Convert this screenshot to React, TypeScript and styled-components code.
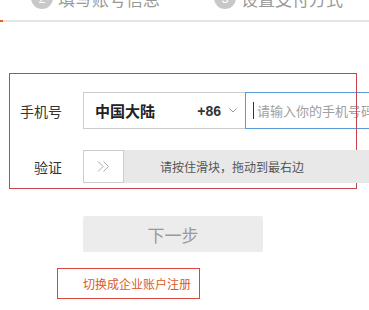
import React from "react";
import styled, { createGlobalStyle } from "styled-components";

const GlobalStyle = createGlobalStyle`
  html, body {
    margin: 0;
    padding: 0;
    overflow: hidden;
    background: #fff;
  }
  body {
    font-family: "Noto Sans CJK SC", "Noto Sans", sans-serif;
    color: #333;
  }
`;

const Page = styled.div`
  width: 369px;
  height: 310px;
  overflow: hidden;
`;

const Steps = styled.div`
  display: flex;
  flex-flow: row nowrap;
  align-items: center;
  height: 24px;
  margin-top: -14px;
`;

const Step = styled.div<{ $left: number }>`
  display: flex;
  align-items: center;
  gap: 5px;
  margin-left: ${(p) => p.$left}px;
  color: #999;
  font-size: 17px;
  white-space: nowrap;
`;

const StepNum = styled.span`
  display: flex;
  align-items: center;
  justify-content: center;
  width: 22px;
  height: 22px;
  border-radius: 50%;
  background: #c8c8c8;
  color: #fff;
  font-size: 13px;
  font-family: "Liberation Sans", Arial, sans-serif;
`;

const Progress = styled.div`
  position: relative;
  height: 2px;
  margin-top: 10px;
  background: #e4e4e4;
`;

const ProgressDone = styled.div`
  width: 3px;
  height: 100%;
  background: #e8641b;
`;

const Form = styled.div`
  position: relative;
  display: grid;
  grid-template-columns: 62px 298px;
  column-gap: 21px;
  row-gap: 21px;
  margin-top: 70px;
  width: 381px;
`;

const Label = styled.div<{ $h: number }>`
  display: flex;
  align-items: center;
  justify-content: flex-end;
  height: ${(p) => p.$h}px;
  font-size: 14px;
  color: #333;
`;

const PhoneField = styled.div`
  display: flex;
  flex-flow: row nowrap;
  height: 37px;
`;

const AreaSelect = styled.div`
  display: flex;
  align-items: center;
  box-sizing: border-box;
  width: 162px;
  height: 100%;
  padding: 0 8px 0 11px;
  border: 1px solid #ccc;
  border-right: 0;
  background: #fff;
`;

const AreaName = styled.span`
  flex: 1;
  font-size: 15px;
  font-weight: 700;
  color: #222;
`;

const AreaCode = styled.span`
  font-family: "Liberation Sans", Arial, sans-serif;
  font-size: 14px;
  font-weight: 700;
  color: #333;
  margin-right: 8px;
`;

const PhoneInput = styled.div`
  display: flex;
  align-items: center;
  box-sizing: border-box;
  flex: 1;
  height: 100%;
  padding-left: 7px;
  border: 1px solid #5a9ad8;
  overflow: hidden;
  white-space: nowrap;
`;

const Caret = styled.span`
  display: inline-block;
  width: 1px;
  height: 17px;
  margin-right: 3px;
  background: #333;
`;

const Placeholder = styled.span`
  font-size: 13px;
  color: #a0a0a0;
`;

const Slider = styled.div`
  display: flex;
  flex-flow: row nowrap;
  position: relative;
  height: 33px;
  background: #e8e8e8;
`;

const Handle = styled.div`
  display: flex;
  align-items: center;
  justify-content: center;
  box-sizing: border-box;
  width: 41px;
  height: 100%;
  border: 1px solid #ccc;
  background: #fff;
  position: relative;
  z-index: 1;
`;

const SliderText = styled.span`
  position: absolute;
  inset: 0;
  display: flex;
  align-items: center;
  justify-content: center;
  font-size: 12px;
  color: #555;
`;

const NextButton = styled.button`
  grid-column: 2;
  width: 180px;
  height: 36px;
  margin-top: 12px;
  border: 0;
  border-radius: 2px;
  background: #ececec;
  color: #999;
  font-family: inherit;
  font-size: 17px;
  padding: 0;
  cursor: default;
`;

const SwitchRow = styled.div`
  grid-column: 2;
  margin-top: -3px;
`;

const SwitchLink = styled.a`
  position: relative;
  display: inline-block;
  height: 20px;
  line-height: 20px;
  font-size: 12px;
  color: #e05a24;
  text-decoration: none;
`;

const Mark = styled.span<{ $color: string }>`
  position: absolute;
  border: 1px solid ${(p) => p.$color};
  pointer-events: none;
`;

const FormMark = styled(Mark)`
  top: -19px;
  left: 9px;
  width: 346px;
  height: 114px;
`;

const LinkMark = styled(Mark)`
  top: -6px;
  bottom: -5px;
  left: -26px;
  right: -9px;
`;

const Chevron = () => (
  <svg width="8" height="5" viewBox="0 0 8 5">
    <path d="M0.5 0.5 L4 4 L7.5 0.5" fill="none" stroke="#999" strokeWidth="1" />
  </svg>
);

const DoubleArrow = () => (
  <svg width="13" height="11" viewBox="0 0 13 11">
    <path
      d="M1 0.5 L6 5.5 L1 10.5 M6.5 0.5 L11.5 5.5 L6.5 10.5"
      fill="none"
      stroke="#aaa"
      strokeWidth="1"
    />
  </svg>
);

const App = () => {
  return (
    <Page>
      <GlobalStyle />
      <Steps>
        <Step $left={31}>
          <StepNum>2</StepNum>
          填写账号信息
        </Step>
        <Step $left={54}>
          <StepNum>3</StepNum>
          设置支付方式
        </Step>
      </Steps>
      <Progress>
        <ProgressDone />
      </Progress>

      <Form>
        <FormMark $color="#c64450" />
        <Label $h={37}>手机号</Label>
        <PhoneField>
          <AreaSelect>
            <AreaName>中国大陆</AreaName>
            <AreaCode>+86</AreaCode>
            <Chevron />
          </AreaSelect>
          <PhoneInput>
            <Caret />
            <Placeholder>请输入你的手机号码</Placeholder>
          </PhoneInput>
        </PhoneField>

        <Label $h={33}>验证</Label>
        <Slider>
          <Handle>
            <DoubleArrow />
          </Handle>
          <SliderText>请按住滑块，拖动到最右边</SliderText>
        </Slider>

        <NextButton>下一步</NextButton>
        <SwitchRow>
          <SwitchLink>
            切换成企业账户注册
            <LinkMark $color="#d9473f" />
          </SwitchLink>
        </SwitchRow>
      </Form>
    </Page>
  );
};

export default App;
